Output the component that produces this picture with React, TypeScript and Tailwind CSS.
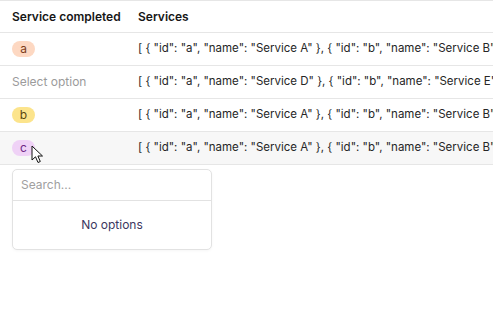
import React from "react";

const rows = [
  { tag: "a", first: "Service A", second: "Service B" },
  { tag: null, first: "Service D", second: "Service E" },
  { tag: "b", first: "Service A", second: "Service B" },
  { tag: "c", first: "Service A", second: "Service B" },
];

const tagStyles: Record<string, string> = {
  a: "bg-[#fdd8c2] text-[#7c3d1c]",
  b: "bg-[#fce48c] text-[#5a4810]",
  c: "bg-[#efd2f6] text-[#6e2585]",
};

function Cursor() {
  return (
    <svg
      className="absolute left-[31px] top-[145px] pointer-events-none"
      width="14"
      height="20"
      viewBox="0 0 14 20"
    >
      <path
        d="M1 1 L1 15 L4.5 11.8 L7 17.5 L9.3 16.5 L6.9 11 L11.5 11 Z"
        fill="#ffffff"
        stroke="#111111"
        strokeWidth="1"
        strokeLinejoin="round"
      />
    </svg>
  );
}

export default function App() {
  return (
    <div
      className="relative w-[493px] h-[320px] bg-white overflow-hidden text-[12px] text-[#1f1f1f]"
      style={{ fontFamily: "Inter, 'Noto Sans', sans-serif" }}
    >
      <div className="border-t border-[#e6e6e6]">
        {/* header */}
        <div className="flex h-[32px] items-center border-b border-[#e6e6e6] font-semibold text-[#161616]">
          <div className="w-[138px] shrink-0 pl-3">Service completed</div>
          <div className="whitespace-nowrap">Services</div>
        </div>

        {rows.map((r, i) => (
          <div
            key={i}
            className={`flex h-[33px] items-center border-b border-[#e6e6e6] ${
              i === 3 ? "bg-[#f7f7f7]" : ""
            }`}
          >
            <div className="w-[138px] shrink-0 pl-3">
              {r.tag ? (
                <span
                  className={`inline-flex h-[16px] w-[23px] items-center justify-center rounded-full text-[12px] leading-none ${tagStyles[r.tag]}`}
                >
                  {r.tag}
                </span>
              ) : (
                <span className="text-[#9b9b9b]">Select option</span>
              )}
            </div>
            <div className="min-w-0 flex-1 whitespace-nowrap overflow-hidden text-[11.5px] text-[#262626]">
              {`[ { "id": "a", "name": "${r.first}" }, { "id": "b", "name": "${r.second}" } ]`}
            </div>
          </div>
        ))}
      </div>

      {/* dropdown */}
      <div className="absolute left-[12px] top-[169px] w-[200px] rounded-[5px] border border-[#e2e2e2] bg-white shadow-[0_1px_3px_rgba(0,0,0,0.04)]">
        <div className="flex h-[31px] items-center border-b border-[#e2e2e2] px-2 text-[#a0a0a0]">
          Search...
        </div>
        <div className="flex h-[48px] items-center justify-center text-[#3c3760]">
          No options
        </div>
      </div>

      <Cursor />
    </div>
  );
}
